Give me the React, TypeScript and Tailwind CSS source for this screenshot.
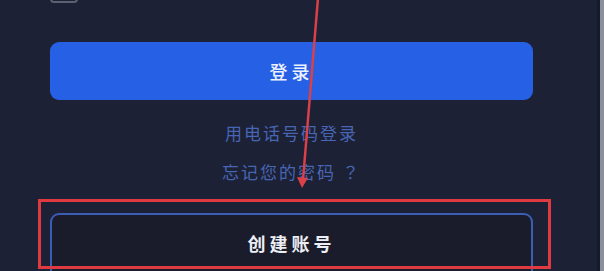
import React from "react";

export default function App() {
  const cjk = { fontFamily: '"Noto Sans CJK SC", "Noto Sans", sans-serif' };
  const tc = { fontFamily: '"Noto Sans CJK TC", "Noto Sans CJK SC", sans-serif' };
  return (
    <div className="relative flex h-[271px] w-[604px] overflow-hidden bg-[#1c2135]" style={cjk}>
      <div className="flex flex-1 flex-col pl-[50px] pr-[64px]">
        <div className="mt-[-25px] h-[28px] w-[28px] shrink-0 rounded-[4px] border-2 border-[#5d6272]" />
        <button className="mt-[39px] flex h-[58px] w-full shrink-0 items-center justify-center rounded-[9px] bg-[#2660e4] text-[18px] font-medium tracking-[4px] text-[#eef2ff]">
          登录
        </button>
        <div className="mt-[21px] shrink-0 text-center text-[17px] leading-[24px] tracking-[2px] text-[#4865b4]">
          用电话号码登录
        </div>
        <div className="mt-[15px] shrink-0 text-center text-[17px] leading-[24px] tracking-[2px] text-[#4865b4]" style={tc}>
          忘记您的密码 ？
        </div>
        <button className="mt-[29px] flex h-[70px] w-full shrink-0 items-start justify-center rounded-[9px] border-2 border-[#3b5db4] bg-[#1a1c2c] pt-[15px] text-[18px] font-bold tracking-[4px] text-[#eceef4]">
          创建账号
        </button>
      </div>
      <div className="w-[3px] bg-[#161a2a]" />
      <div className="w-[4px] bg-[#8a8f9a]" />

      {/* annotation overlays */}
      <div className="absolute left-[38px] top-[199px] h-[70px] w-[513px] border-[3px] border-[#de3a40]" />
      <svg className="absolute left-0 top-0" width="604" height="271" viewBox="0 0 604 271">
        <line x1="318" y1="-2" x2="303" y2="180" stroke="#d94048" strokeWidth="2.5" />
        <polygon points="297,177 308,178 302,188" fill="#d94048" />
      </svg>
    </div>
  );
}
